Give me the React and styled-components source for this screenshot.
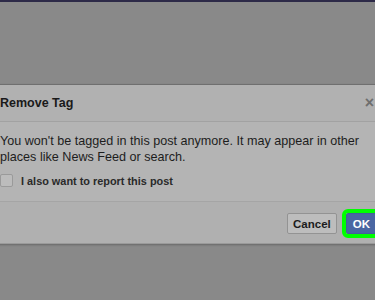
import React from 'react';
import styled, { createGlobalStyle } from 'styled-components';

const GlobalStyle = createGlobalStyle`
  html, body {
    margin: 0;
    padding: 0;
    background: #898989;
    overflow: hidden;
    font-family: "Liberation Sans", Arial, sans-serif;
  }
`;

const Page = styled.div`
  width: 375px;
  height: 300px;
  overflow: hidden;
  background: #898989;
`;

const TopBar = styled.div`
  height: 2px;
  background: #2d2a48;
`;

const Backdrop = styled.div`
  padding-top: 82px;
`;

const Dialog = styled.div`
  margin-left: -11px;
  width: 396px;
  background: #b4b4b4;
  border-top: 1px solid #6f6f6f;
  box-shadow: 0 1px 2px rgba(0, 0, 0, 0.25);
`;

const Header = styled.div`
  height: 36px;
  padding: 0 11px 0 11px;
  display: flex;
  align-items: center;
  justify-content: space-between;
  background: #b1b1b1;
  border-bottom: 1px solid #a2a2a2;
`;

const Title = styled.h3`
  margin: 0;
  font-size: 12.5px;
  font-weight: bold;
  color: #1a1a1a;
`;

const Close = styled.span`
  font-size: 16px;
  font-weight: bold;
  color: #6e6e6e;
`;

const Body = styled.div`
  padding: 11px 11px 14px;
`;

const Text = styled.p`
  margin: 0;
  font-size: 12.6px;
  line-height: 16px;
  color: #1d1d1d;
`;

const CheckRow = styled.label`
  display: flex;
  align-items: center;
  gap: 8px;
  margin-top: 9px;
  font-size: 10.9px;
  font-weight: bold;
  color: #2a2a2a;
`;

const Box = styled.span`
  width: 11px;
  height: 11px;
  border: 1px solid #9a9a9a;
  border-radius: 2px;
  background: #bcbcbc;
`;

const Footer = styled.div`
  display: flex;
  justify-content: flex-end;
  align-items: center;
  gap: 9px;
  padding: 11px 8px 9px;
  background: #b0b0b0;
  border-top: 1px solid #a5a5a5;
  border-bottom: 1px solid #9a9a9a;
`;

const Button = styled.button`
  height: 21px;
  padding: 0 ${p => (p.$primary ? 6 : 5)}px;
  font-family: "Liberation Sans", Arial, sans-serif;
  font-size: 11.5px;
  font-weight: bold;
  border-radius: 2px;
  cursor: pointer;
  color: ${p => (p.$primary ? '#ffffff' : '#1c1c1c')};
  background: ${p => (p.$primary ? '#4a66a2' : '#bdbdbd')};
  border: 1px solid ${p => (p.$primary ? '#42609a' : '#939393')};
  outline: ${p => (p.$highlight ? '4px solid #00ff00' : 'none')};
  outline-offset: 0;
`;

export default function App() {
  return (
    <Page>
      <GlobalStyle />
      <TopBar />
      <Backdrop>
        <Dialog>
          <Header>
            <Title>Remove Tag</Title>
            <Close>×</Close>
          </Header>
          <Body>
            <Text>
              You won't be tagged in this post anymore. It may appear in other places
              like News Feed or search.
            </Text>
            <CheckRow>
              <Box />
              I also want to report this post
            </CheckRow>
          </Body>
          <Footer>
            <Button>Cancel</Button>
            <Button $primary $highlight>OK</Button>
          </Footer>
        </Dialog>
      </Backdrop>
    </Page>
  );
}
